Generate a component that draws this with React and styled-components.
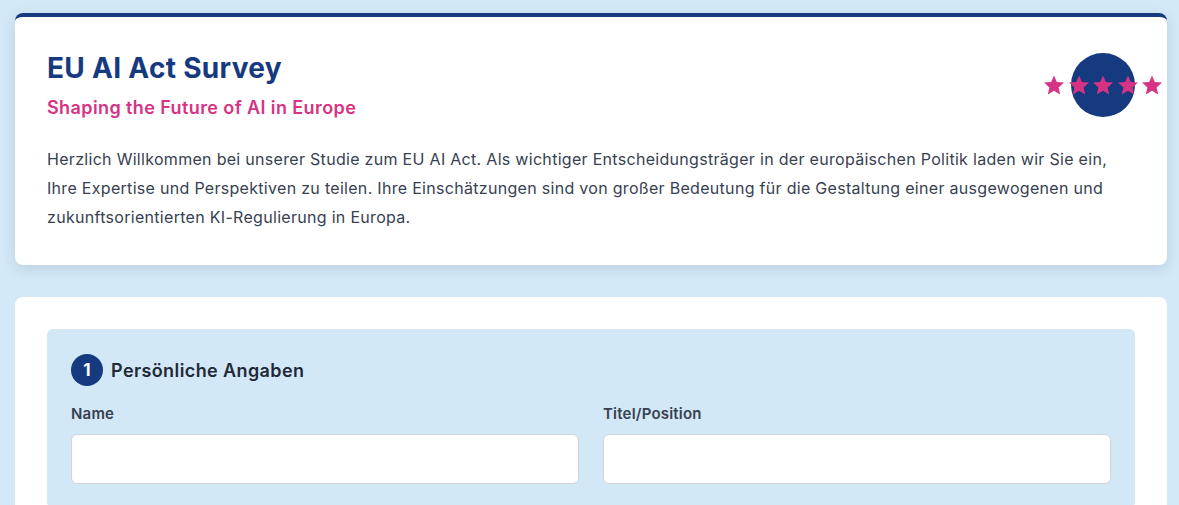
import React from 'react';
import styled, { createGlobalStyle } from 'styled-components';

const GlobalStyle = createGlobalStyle`
  * { box-sizing: border-box; }
  body {
    margin: 0;
    background: #d4e9f7;
    font-family: Inter, "Noto Sans", "Liberation Sans", sans-serif;
    color: #374151;
  }
`

const Page = styled.div`
  padding: 13px 12px 0 15px;
  display: flex;
  flex-direction: column;
  gap: 32px;
`

const HeaderCard = styled.header`
  background: #fff;
  border-top: 4px solid #153a80;
  border-radius: 8px;
  box-shadow: 0 4px 14px rgba(30, 60, 100, 0.14);
  padding: 34px 32px 33px;
`

const HeaderTop = styled.div`
  display: flex;
  justify-content: space-between;
  align-items: center;
`

const Title = styled.h1`
  margin: 0 0 10px;
  font-size: 28px;
  line-height: 34px;
  font-weight: 700;
  color: #153a80;
  letter-spacing: 0.3px;
`

const Subtitle = styled.h2`
  margin: 0;
  font-size: 18px;
  line-height: 26px;
  font-weight: 600;
  color: #d63384;
  letter-spacing: 0.4px;
`

const Intro = styled.p`
  margin: 24px 0 0;
  font-size: 16px;
  line-height: 29px;
  color: #374151;
  letter-spacing: 0.3px;
`

const Logo = styled.div`
  position: relative;
  width: 64px;
  height: 64px;
  border-radius: 50%;
  background: #153a80;
  margin-top: -2px;
`

const Stars = styled.div`
  position: absolute;
  left: 50%;
  top: 50%;
  transform: translate(-50%, -50%);
  display: flex;
  gap: 2.5px;
`

const FormCard = styled.main`
  background: #fff;
  border-radius: 8px;
  padding: 32px;
  min-height: 260px;
`

const Section = styled.section`
  background: #d2e8f6;
  border-radius: 6px;
  padding: 25px 24px 24px;
`

const SectionHeading = styled.h3`
  display: flex;
  align-items: center;
  gap: 8px;
  margin: 0 0 18px;
  font-size: 18px;
  font-weight: 600;
  color: #1f2937;
  letter-spacing: 0.4px;
`

const StepNumber = styled.span`
  width: 32px;
  height: 32px;
  border-radius: 50%;
  background: #153a80;
  color: #fff;
  font-size: 17px;
  font-weight: 700;
  letter-spacing: 0;
  display: flex;
  align-items: center;
  justify-content: center;
`

const FieldGrid = styled.div`
  display: grid;
  grid-template-columns: 1fr 1fr;
  gap: 24px;
`

const Field = styled.label`
  display: flex;
  flex-direction: column;
`

const Label = styled.span`
  font-size: 15px;
  line-height: 20px;
  font-weight: 600;
  color: #374151;
  letter-spacing: 0.2px;
  margin-bottom: 10px;
`

const Input = styled.input`
  height: 50px;
  border: 1px solid #d1d5db;
  border-radius: 6px;
  background: #fff;
  padding: 0 14px;
  font: inherit;
  font-size: 16px;
`

const Star = () => (
  <svg width="22" height="22" viewBox="0 0 24 24">
    <path fill="#d63384" d="M12 1.5l3.1 7.2 7.8.7-5.9 5.2 1.8 7.7L12 18.3l-6.8 4 1.8-7.7-5.9-5.2 7.8-.7z" />
  </svg>
);

export default function App() {
  return (
    <>
      <GlobalStyle />
      <Page>
        <HeaderCard>
          <HeaderTop>
            <div>
              <Title>EU AI Act Survey</Title>
              <Subtitle>Shaping the Future of AI in Europe</Subtitle>
            </div>
            <Logo>
              <Stars>
                {[0, 1, 2, 3, 4].map(i => <Star key={i} />)}
              </Stars>
            </Logo>
          </HeaderTop>
          <Intro>
            Herzlich Willkommen bei unserer Studie zum EU AI Act. Als wichtiger Entscheidungsträger in der europäischen Politik laden wir Sie ein, Ihre Expertise und Perspektiven zu teilen. Ihre Einschätzungen sind von großer Bedeutung für die Gestaltung einer ausgewogenen und zukunftsorientierten KI-Regulierung in Europa.
          </Intro>
        </HeaderCard>
        <FormCard>
          <Section>
            <SectionHeading>
              <StepNumber>1</StepNumber>
              Persönliche Angaben
            </SectionHeading>
            <FieldGrid>
              <Field>
                <Label>Name</Label>
                <Input type="text" />
              </Field>
              <Field>
                <Label>Titel/Position</Label>
                <Input type="text" />
              </Field>
            </FieldGrid>
          </Section>
        </FormCard>
      </Page>
    </>
  );
}
